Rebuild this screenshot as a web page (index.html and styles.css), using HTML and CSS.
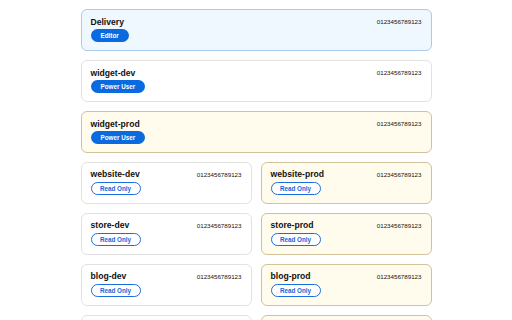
FILE: index.html
```html
<!DOCTYPE html>
<html lang="en">
<head>
  <meta charset="UTF-8" />
  <title>Accounts</title>
  <link rel="stylesheet" href="styles.css">
</head>
<body>
  <div class="accounts">
    <!-- Org account -->
    <div class="card org">
      <div class="card-top">
        <span class="name">Delivery</span>
        <span class="acct-id">0123456789123</span>
      </div>
      <span class="role solid">Editor</span>
    </div>

    <div class="card">
      <div class="card-top">
        <span class="name">widget-dev</span>
        <span class="acct-id">0123456789123</span>
      </div>
      <span class="role solid">Power User</span>
    </div>

    <div class="card prod">
      <div class="card-top">
        <span class="name">widget-prod</span>
        <span class="acct-id">0123456789123</span>
      </div>
      <span class="role solid">Power User</span>
    </div>

    <!-- Paired dev / prod accounts -->
    <div class="pair">
      <div class="card">
        <div class="card-top">
          <span class="name">website-dev</span>
          <span class="acct-id">0123456789123</span>
        </div>
        <span class="role outline">Read Only</span>
      </div>
      <div class="card prod">
        <div class="card-top">
          <span class="name">website-prod</span>
          <span class="acct-id">0123456789123</span>
        </div>
        <span class="role outline">Read Only</span>
      </div>
    </div>

    <div class="pair">
      <div class="card">
        <div class="card-top">
          <span class="name">store-dev</span>
          <span class="acct-id">0123456789123</span>
        </div>
        <span class="role outline">Read Only</span>
      </div>
      <div class="card prod">
        <div class="card-top">
          <span class="name">store-prod</span>
          <span class="acct-id">0123456789123</span>
        </div>
        <span class="role outline">Read Only</span>
      </div>
    </div>

    <div class="pair">
      <div class="card">
        <div class="card-top">
          <span class="name">blog-dev</span>
          <span class="acct-id">0123456789123</span>
        </div>
        <span class="role outline">Read Only</span>
      </div>
      <div class="card prod">
        <div class="card-top">
          <span class="name">blog-prod</span>
          <span class="acct-id">0123456789123</span>
        </div>
        <span class="role outline">Read Only</span>
      </div>
    </div>

    <!-- next pair, only its top edge is in view -->
    <div class="pair">
      <div class="card"></div>
      <div class="card prod"></div>
    </div>
  </div>
</body>
</html>
```

FILE: styles.css
```css
html {
  overflow: hidden;
}

body {
  margin: 0;
  font-family: 'Liberation Sans', Arial, sans-serif;
  background-color: #ffffff;
  color: #111;
}

.accounts {
  width: 351px;
  margin: 0 auto;
  padding-top: 9px;
  display: flex;
  flex-direction: column;
  gap: 9px;
}

.pair {
  display: grid;
  grid-template-columns: 1fr 1fr;
  gap: 9px;
}

.card {
  background: #fff;
  border: 1px solid #e2e2e2;
  border-radius: 6px;
  padding: 6px 9px 8px;
  height: 42px;
  box-sizing: border-box;
  display: flex;
  flex-direction: column;
  align-items: flex-start;
  gap: 2px;
}

.card.org {
  background: #eff7ff;
  border-color: #a9cbf2;
}

.card.prod {
  background: #fffcee;
  border-color: #d3c199;
}

.card-top {
  display: flex;
  justify-content: space-between;
  align-items: center;
  width: 100%;
  height: 11px;
}

.name {
  font-size: 8.6px;
  font-weight: bold;
}

.acct-id {
  font-size: 6.2px;
  color: #111;
}

.role {
  display: inline-flex;
  align-items: center;
  justify-content: center;
  height: 13px;
  border-radius: 7px;
  font-size: 6.3px;
  font-weight: bold;
  box-sizing: border-box;
}

.role.solid {
  background-color: #0a6ae0;
  color: white;
  padding: 0 10px;
}

.role.outline {
  height: 14px;
  background: #fff;
  color: #1467db;
  border: 1px solid #1a6ee0;
  width: 50px;
}
```
